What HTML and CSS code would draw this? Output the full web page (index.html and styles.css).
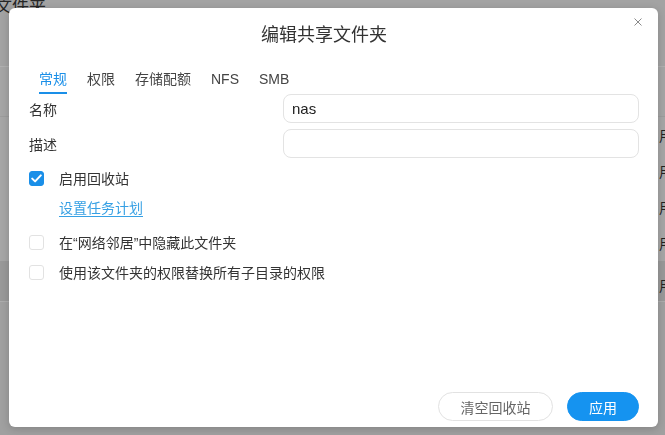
FILE: index.html
```html
<!DOCTYPE html>
<html lang="zh-CN">
<head>
<meta charset="utf-8">
<title>编辑共享文件夹</title>
<link rel="stylesheet" href="styles.css">
</head>
<body>
<div class="backdrop">
  <div class="bg-top">
    <span class="bg-title">文件夹</span>
    <span class="bg-tool">品</span>
  </div>
  <div class="bg-head"></div>
  <div class="bg-row"><span class="bg-cell">已启用</span></div>
  <div class="bg-row"><span class="bg-cell">已启用</span></div>
  <div class="bg-row"><span class="bg-cell">已启用</span></div>
  <div class="bg-row"><span class="bg-cell">已启用</span></div>
  <div class="bg-row bg-row-sel"><span class="bg-cell">已启用</span></div>
  <div class="bg-rest"></div>
</div>

<div class="modal">
  <button class="close" aria-label="关闭">
    <svg width="8" height="8" viewBox="0 0 8 8"><path d="M0.5 0.5L7.5 7.5M7.5 0.5L0.5 7.5" stroke="#8a8a8a" stroke-width="1" fill="none"/></svg>
  </button>
  <h1 class="title">编辑共享文件夹</h1>
  <nav class="tabs">
    <span class="tab active">常规</span>
    <span class="tab">权限</span>
    <span class="tab">存储配额</span>
    <span class="tab">NFS</span>
    <span class="tab">SMB</span>
  </nav>
  <div class="form">
    <div class="field">
      <span class="label">名称</span>
      <div class="input">nas</div>
    </div>
    <div class="field">
      <span class="label">描述</span>
      <div class="input"></div>
    </div>
    <div class="check check-first">
      <span class="box box-on">
        <svg width="11" height="9" viewBox="0 0 11 9"><path d="M1.2 4.6L4.1 7.4L9.8 1.4" stroke="#fff" stroke-width="2" fill="none" stroke-linecap="round" stroke-linejoin="round"/></svg>
      </span>
      <span class="check-text">启用回收站</span>
    </div>
    <a class="link">设置任务计划</a>
    <div class="check check-gap">
      <span class="box"></span>
      <span class="check-text">在“网络邻居”中隐藏此文件夹</span>
    </div>
    <div class="check">
      <span class="box"></span>
      <span class="check-text">使用该文件夹的权限替换所有子目录的权限</span>
    </div>
  </div>
  <div class="footer">
    <button class="btn btn-ghost">清空回收站</button>
    <button class="btn btn-primary">应用</button>
  </div>
</div>
</body>
</html>
```

FILE: styles.css
```css
* { box-sizing: border-box; }

html, body {
  margin: 0;
  padding: 0;
  width: 665px;
  height: 435px;
  overflow: hidden;
  font-family: "Liberation Sans", "Noto Sans CJK SC", sans-serif;
  color: #333;
}

/* ---------- dimmed page behind the dialog ---------- */
.backdrop {
  width: 665px;
  height: 435px;
  display: flex;
  flex-direction: column;
  background: #a1a1a1;
}

.bg-top {
  height: 66px;
  background: #a3a3a3;
  display: flex;
  justify-content: space-between;
  align-items: flex-start;
}

.bg-title {
  font-size: 17px;
  line-height: 20px;
  margin-top: -3px;
  margin-left: -5px;
  color: #262626;
}

.bg-tool {
  margin-top: 76px;
  margin-right: -4px;
  font-size: 12px;
  color: #7a7a7a;
}

.bg-head {
  height: 51px;
  background: #a5a5a5;
  border-top: 1px solid #b0b0b0;
  border-bottom: 1px solid #9c9c9c;
}

.bg-row {
  height: 36px;
  display: flex;
  justify-content: flex-end;
  align-items: center;
  background: #a6a6a6;
}

.bg-row-sel {
  height: 40px;
  padding-top: 8px;
  background: #999;
}

.bg-cell {
  font-size: 14px;
  color: #222;
  margin-right: -8px;
}

.bg-rest {
  flex: 1;
  background: #a0a0a0;
  border-top: 1px solid #adadad;
}

/* ---------- dialog ---------- */
.modal {
  position: fixed;
  left: 9px;
  top: 8px;
  width: 649px;
  height: 419px;
  background: #fff;
  border-radius: 6px;
  box-shadow: 0 2px 8px rgba(0, 0, 0, 0.18);
  display: flex;
  flex-direction: column;
}

.close {
  position: absolute;
  top: 7px;
  right: 13px;
  width: 14px;
  height: 14px;
  padding: 0;
  border: 0;
  background: transparent;
  display: flex;
  align-items: center;
  justify-content: center;
}

.title {
  margin: 15px 0 0;
  padding-right: 19px;
  font-size: 18px;
  line-height: 24px;
  font-weight: normal;
  text-align: center;
  color: #333;
}

.tabs {
  display: flex;
  gap: 20px;
  margin-top: 22px;
  padding-left: 30px;
}

.tab {
  font-size: 14px;
  line-height: 20px;
  padding-bottom: 3px;
  border-bottom: 2px solid transparent;
  color: #444;
}

.tab.active {
  color: #1a8fe8;
  border-bottom-color: #1a8fe8;
}

.form {
  display: flex;
  flex-direction: column;
  padding: 0 19px 0 20px;
}

.field {
  display: flex;
  align-items: center;
  margin-bottom: 6px;
}

.label {
  width: 254px;
  font-size: 14px;
  color: #333;
}

.input {
  flex: 1;
  height: 29px;
  border: 1px solid #e3e3e3;
  border-radius: 8px;
  padding: 0 8px;
  font-size: 15px;
  line-height: 27px;
  color: #222;
}

.check {
  display: flex;
  align-items: center;
  height: 20px;
  margin-top: 10px;
}

.check-first {
  margin-top: 4px;
}

.check-gap {
  margin-top: 14px;
}

.box {
  width: 15px;
  height: 15px;
  border: 1px solid #e2e2e2;
  border-radius: 3px;
  background: #fff;
  display: flex;
  align-items: center;
  justify-content: center;
  margin-right: 15px;
}

.box-on {
  background: #1a8fe8;
  border-color: #1a8fe8;
}

.check-text {
  font-size: 14px;
  color: #333;
}

.link {
  align-self: flex-start;
  margin-top: 10px;
  margin-left: 30px;
  font-size: 14px;
  line-height: 20px;
  color: #36a0e4;
  text-decoration: underline;
  text-underline-offset: 3px;
}

.footer {
  margin-top: auto;
  display: flex;
  justify-content: flex-end;
  gap: 14px;
  padding: 0 19px 6px 0;
}

.btn {
  height: 29px;
  border-radius: 15px;
  font-family: "Liberation Sans", "Noto Sans CJK SC", sans-serif;
  font-size: 14px;
  padding: 0;
}

.btn-ghost {
  width: 115px;
  background: #fff;
  border: 1px solid #e2e2e2;
  color: #666;
}

.btn-primary {
  width: 72px;
  background: #1593f0;
  border: 1px solid #1593f0;
  color: #fff;
}
```
